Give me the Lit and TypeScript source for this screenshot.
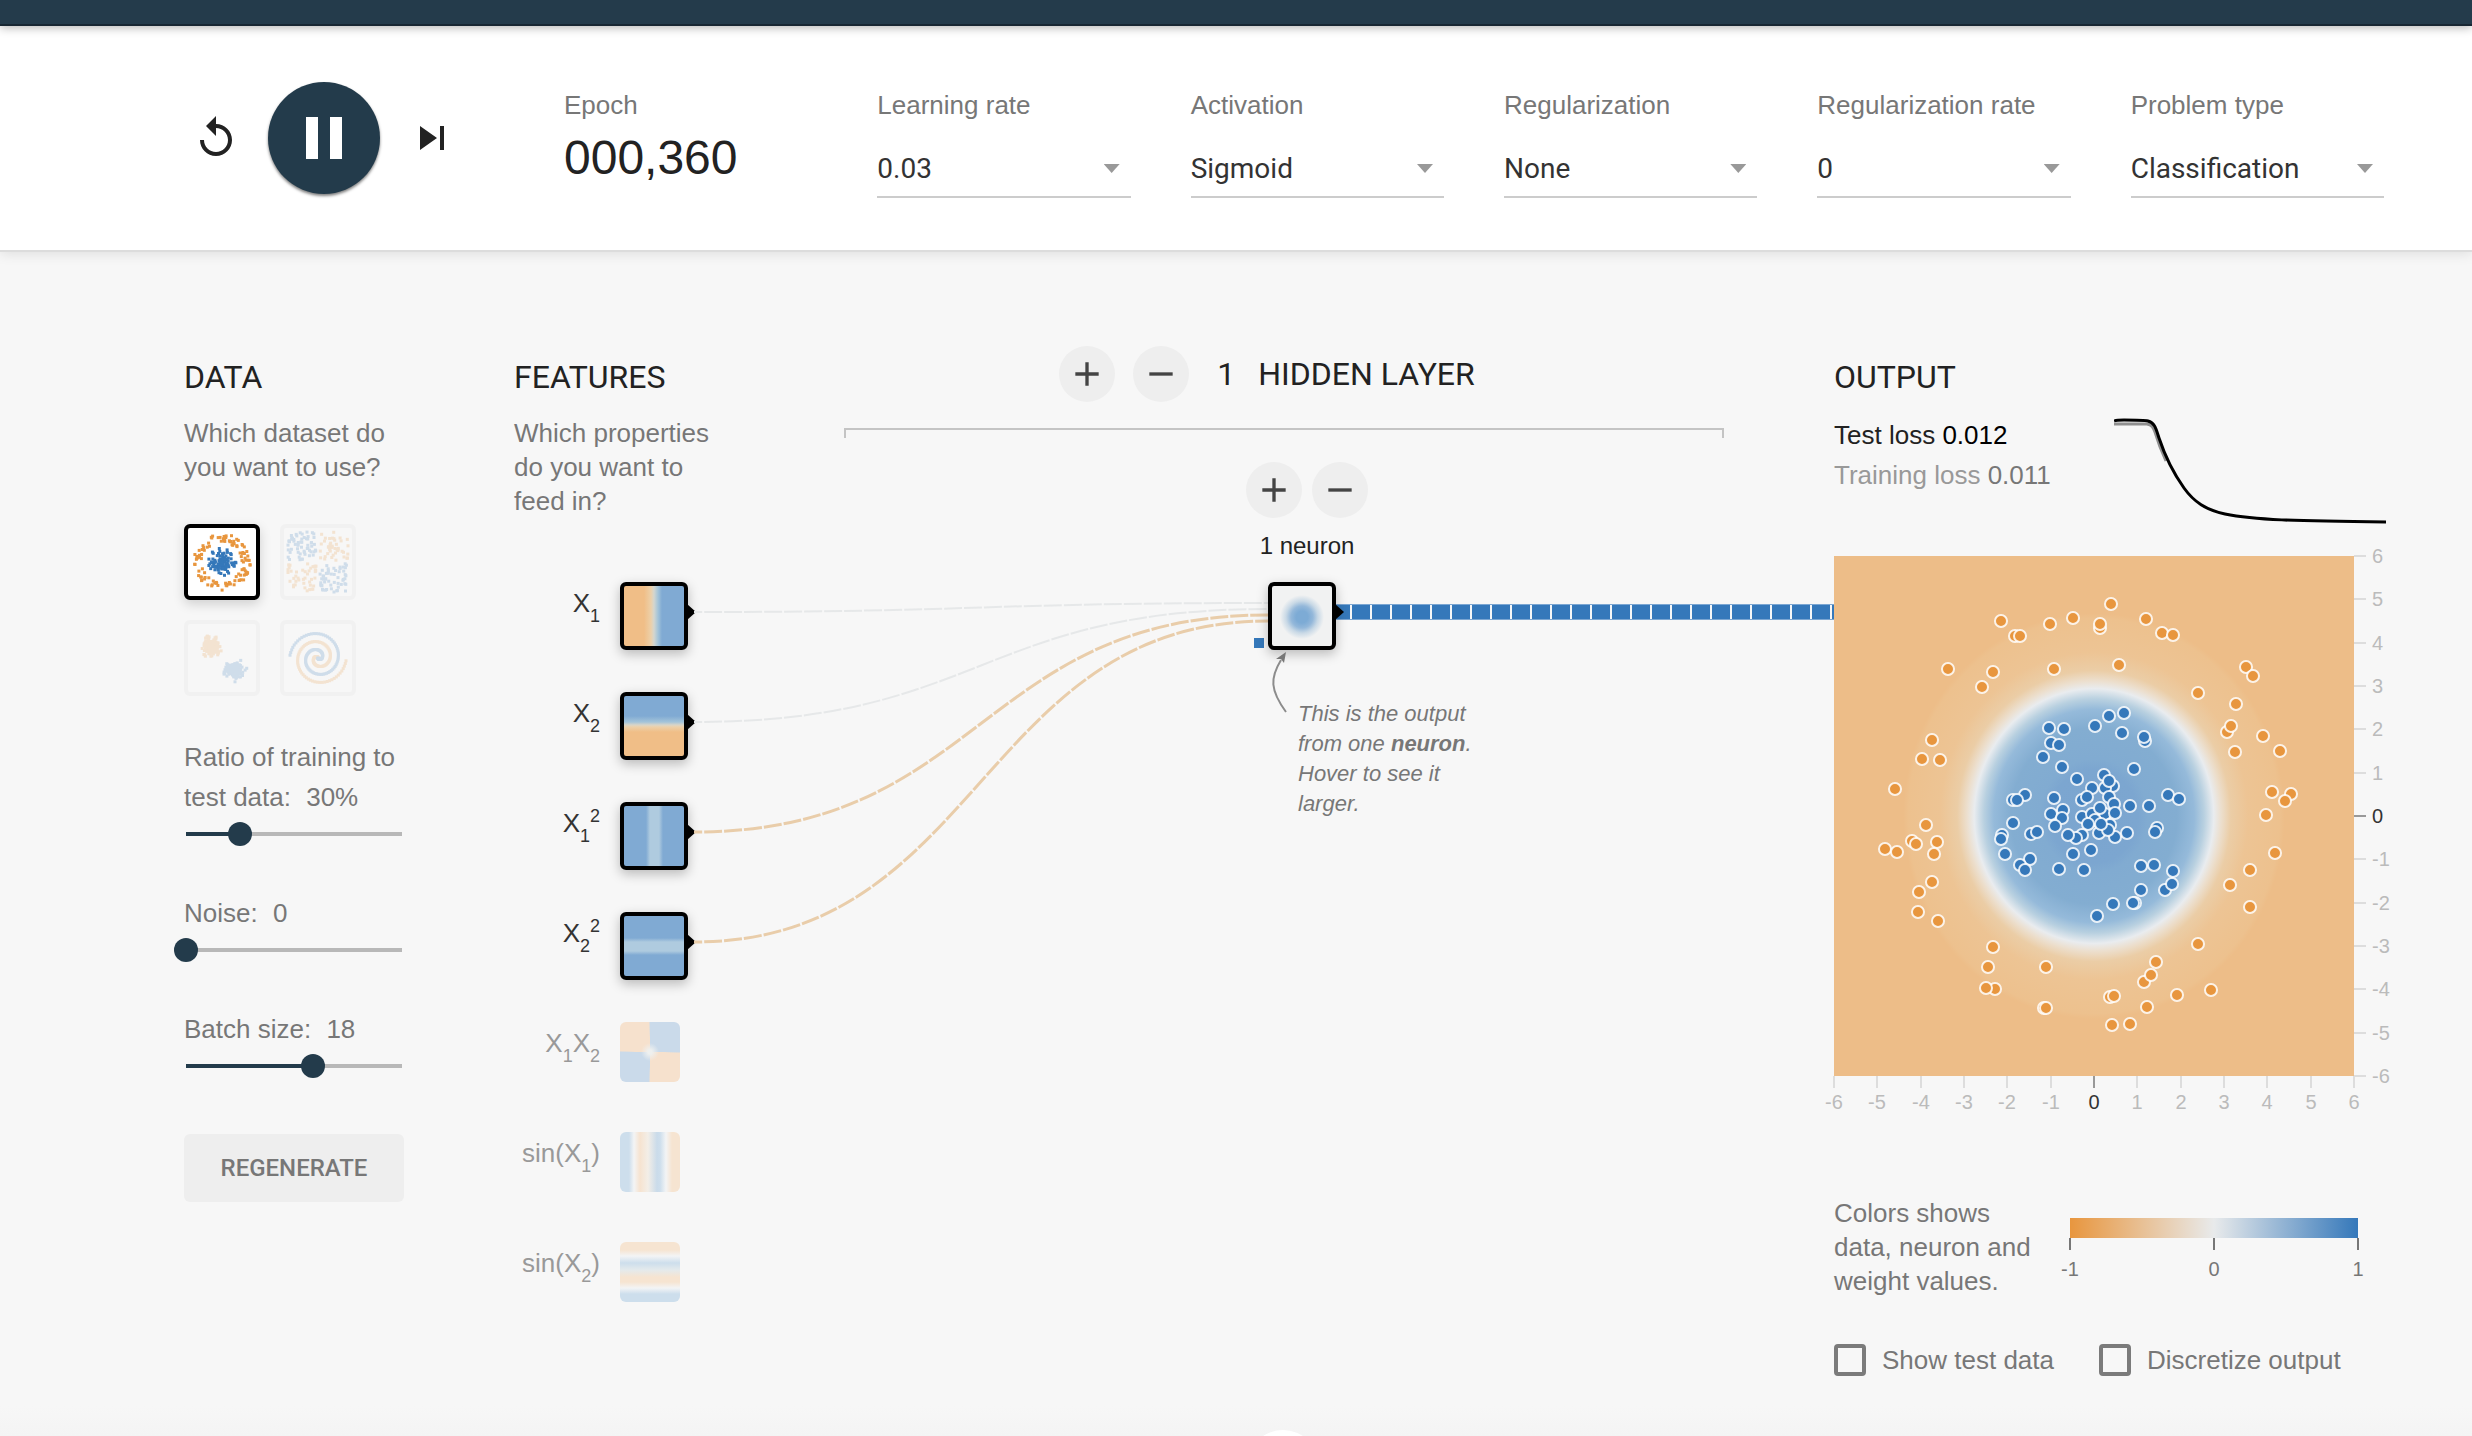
import { LitElement, html, css, svg } from "lit";
import { customElement, property, state } from "lit/decorators.js";
import { classMap } from "lit/directives/class-map.js";
import { styleMap } from "lit/directives/style-map.js";

const ORANGE = "#e8963e";
const BLUE = "#3578ba";

type Dot = { x: number; y: number; positive: boolean };

/** Small deterministic generator, so that the previews look the same on every load. */
function makeRandom(seed: number) {
  let s = seed;
  return () => {
    s = (s * 1664525 + 1013904223) % 4294967296;
    return s / 4294967296;
  };
}

function circleData(): Dot[] {
  const rnd = makeRandom(7);
  const dots: Dot[] = [];
  for (let i = 0; i < 220; i++) {
    const positive = i < 110;
    const r = positive ? rnd() * 2.5 : 3.5 + rnd() * 1.5;
    const a = rnd() * 2 * Math.PI;
    dots.push({ x: r * Math.sin(a), y: r * Math.cos(a), positive });
  }
  return dots;
}

function xorData(): Dot[] {
  const rnd = makeRandom(21);
  const dots: Dot[] = [];
  for (let i = 0; i < 200; i++) {
    let x = rnd() * 10 - 5;
    let y = rnd() * 10 - 5;
    x += x > 0 ? 0.3 : -0.3;
    y += y > 0 ? 0.3 : -0.3;
    dots.push({ x, y, positive: x * y >= 0 });
  }
  return dots;
}

function gaussData(): Dot[] {
  const rnd = makeRandom(3);
  const normal = () => (rnd() + rnd() + rnd() + rnd() - 2) * 1.3;
  const dots: Dot[] = [];
  for (let i = 0; i < 280; i++) {
    const positive = i % 2 === 0;
    const c = positive ? 2.2 : -1.9;
    dots.push({ x: c + normal(), y: c + normal(), positive });
  }
  return dots;
}

function spiralData(): Dot[] {
  const dots: Dot[] = [];
  const n = 110;
  for (const positive of [false, true]) {
    for (let i = 0; i < n; i++) {
      const r = (i / n) * 5;
      const t = ((1.75 * i) / n) * 2 * Math.PI + (positive ? 0 : Math.PI);
      dots.push({ x: r * Math.sin(t), y: r * Math.cos(t), positive });
    }
  }
  return dots;
}

const DATASETS = [
  { id: "circle", label: "Circle", dots: circleData() },
  { id: "xor", label: "Exclusive or", dots: xorData() },
  { id: "gauss", label: "Gaussian", dots: gaussData() },
  { id: "spiral", label: "Spiral", dots: spiralData() },
];

const FIELDS = [
  { id: "learning-rate", label: "Learning rate", value: "0.03", options: ["0.001", "0.01", "0.03", "0.1", "0.3", "1"] },
  { id: "activation", label: "Activation", value: "Sigmoid", options: ["ReLU", "Tanh", "Sigmoid", "Linear"] },
  { id: "regularization", label: "Regularization", value: "None", options: ["None", "L1", "L2"] },
  { id: "regularization-rate", label: "Regularization rate", value: "0", options: ["0", "0.001", "0.01", "0.1", "1"] },
  { id: "problem-type", label: "Problem type", value: "Classification", options: ["Classification", "Regression"] },
];

const FEATURES = [
  { id: "x1", label: html`X<sub>1</sub>`, active: true },
  { id: "x2", label: html`X<sub>2</sub>`, active: true },
  { id: "x1sq", label: html`X<sub>1</sub><sup>2</sup>`, active: true },
  { id: "x2sq", label: html`X<sub>2</sub><sup>2</sup>`, active: true },
  { id: "x1x2", label: html`X<sub>1</sub>X<sub>2</sub>`, active: false },
  { id: "sinx1", label: html`sin(X<sub>1</sub>)`, active: false },
  { id: "sinx2", label: html`sin(X<sub>2</sub>)`, active: false },
];

/** Link start and end heights, measured from the top edge of the first node. */
const LINKS = [
  { from: 30, to: 21, width: 2, color: "#e6e8e9" },
  { from: 140, to: 27, width: 2, color: "#e6e8e9" },
  { from: 250, to: 33, width: 3, color: "#e9cdaa" },
  { from: 360, to: 39, width: 3, color: "#e9cdaa" },
];

/** Points of the training set on the 520 by 520 heat map. */
const NEGATIVE: [number, number][] = [
  [167, 65], [181, 80], [186, 80], [216, 68], [239, 62], [266, 72], [266, 68], [277, 48],
  [312, 63], [328, 77], [339, 79], [114, 113], [159, 116], [148, 131], [220, 113], [285, 109],
  [412, 111], [419, 120], [364, 137], [402, 148], [393, 176], [397, 170], [401, 196], [429, 180],
  [446, 195], [98, 184], [88, 203], [106, 204], [61, 233], [438, 236], [457, 238], [451, 245],
  [432, 259], [92, 269], [78, 285], [82, 288], [103, 286], [51, 293], [63, 296], [100, 298],
  [441, 297], [416, 314], [396, 329], [416, 351], [98, 326], [85, 336], [84, 356], [104, 365],
  [159, 391], [154, 411], [212, 411], [161, 433], [152, 432], [210, 452], [212, 452], [364, 388],
  [322, 406], [310, 426], [317, 419], [276, 441], [280, 440], [343, 439], [377, 434], [313, 451],
  [278, 469], [296, 468],
];
const POSITIVE: [number, number][] = [
  [275, 160], [290, 157], [261, 170], [215, 172], [230, 173], [217, 187], [225, 189], [288, 177],
  [311, 185], [310, 181], [209, 201], [228, 211], [300, 213], [243, 223], [270, 219], [279, 230],
  [271, 232], [275, 225], [258, 232], [248, 244], [253, 241], [191, 239], [179, 244], [183, 244],
  [220, 242], [275, 241], [280, 248], [296, 250], [315, 250], [334, 239], [345, 243], [229, 254],
  [217, 258], [228, 262], [221, 270], [248, 261], [258, 258], [271, 258], [266, 252], [281, 257],
  [261, 264], [254, 268], [276, 269], [179, 267], [197, 278], [203, 276], [293, 277], [281, 281],
  [265, 277], [274, 274], [267, 268], [248, 279], [242, 282], [234, 279], [323, 272], [321, 276],
  [168, 279], [167, 283], [171, 298], [196, 303], [186, 309], [191, 314], [225, 313], [239, 298],
  [257, 294], [250, 314], [307, 310], [320, 309], [339, 315], [331, 334], [338, 328], [307, 334],
  [301, 347], [299, 347], [279, 348], [263, 360],
];

const icon = (path: string, cls: string) => html`
  <svg class=${cls} viewBox="0 0 24 24" aria-hidden="true"><path d=${path} fill="currentColor"></path></svg>
`;
const REPLAY = "M12 5V1L7 6l5 5V7c3.31 0 6 2.69 6 6s-2.69 6-6 6-6-2.69-6-6H4c0 4.42 3.58 8 8 8s8-3.58 8-8-3.58-8-8-8z";
const PAUSE = "M6 19h4V5H6v14zm8-14v14h4V5h-4z";
const PLAY = "M8 5v14l11-7z";
const NEXT = "M6 18l8.5-6L6 6v12zM16 6v12h2V6h-2z";
const ADD = "M19 13h-6v6h-2v-6H5v-2h6V5h2v6h6v2z";
const REMOVE = "M19 13H5v-2h14v2z";

const base = css`
  * {
    box-sizing: border-box;
  }
  button {
    font: inherit;
    border: 0;
    padding: 0;
    background: none;
    color: inherit;
    cursor: pointer;
  }
  svg {
    display: block;
  }
  h2 {
    margin: 0;
    font-family: Roboto, sans-serif;
    font-size: 32px;
    font-weight: 400;
    line-height: 40px;
    color: #222;
  }
  p {
    margin: 0;
  }
`;

@customElement("top-controls")
export class TopControls extends LitElement {
  @state() private playing = true;

  static styles = [
    base,
    css`
      :host {
        display: flex;
        align-items: flex-start;
        gap: 108px;
        padding: 56px 88px 52px 192px;
        background: #fff;
        border-bottom: 2px solid #dcdcdc;
        box-shadow: 0 2px 12px rgba(0, 0, 0, 0.1);
        color: #222;
      }
      .buttons {
        display: flex;
        align-items: center;
        gap: 28px;
      }
      .icon {
        width: 48px;
        height: 48px;
      }
      .play {
        display: grid;
        place-items: center;
        width: 112px;
        height: 112px;
        border-radius: 50%;
        background: #233b4b;
        color: #fff;
        box-shadow: 0 2px 3px rgba(0, 0, 0, 0.5);
      }
      .play-icon {
        width: 72px;
        height: 72px;
      }
      .fields {
        flex: 1;
        display: grid;
        grid-template-columns: repeat(6, minmax(0, 1fr));
        gap: 60px;
        padding-top: 8px;
      }
      .label {
        display: block;
        line-height: 30px;
        color: #777;
        white-space: nowrap;
      }
      .epoch {
        margin-top: 10px;
        font-size: 48px;
        line-height: 56px;
      }
      .select {
        position: relative;
        margin-top: 28px;
      }
      .select::after {
        content: "";
        position: absolute;
        right: 11px;
        top: 16px;
        width: 16px;
        height: 9px;
        background: #999;
        clip-path: polygon(0 0, 100% 0, 50% 100%);
        pointer-events: none;
      }
      select {
        appearance: none;
        display: block;
        width: 100%;
        height: 50px;
        padding: 0 30px 6px 0;
        border: 0;
        border-bottom: 2px solid #ccc;
        border-radius: 0;
        background: none;
        color: #333;
        font-family: Roboto, sans-serif;
        font-size: 28px;
        line-height: 40px;
      }
    `,
  ];

  render() {
    return html`
      <div class="buttons">
        <button type="button" aria-label="Reset the network">${icon(REPLAY, "icon")}</button>
        <button class="play" type="button" aria-label="Run or pause" @click=${() => (this.playing = !this.playing)}>
          ${icon(this.playing ? PAUSE : PLAY, "play-icon")}
        </button>
        <button type="button" aria-label="Step">${icon(NEXT, "icon")}</button>
      </div>
      <div class="fields">
        <div>
          <span class="label">Epoch</span>
          <div class="epoch">000,360</div>
        </div>
        ${FIELDS.map(
          (f) => html`
            <div>
              <label class="label" for=${f.id}>${f.label}</label>
              <div class="select">
                <select id=${f.id}>
                  ${f.options.map((o) => html`<option ?selected=${o === f.value}>${o}</option>`)}
                </select>
              </div>
            </div>
          `
        )}
      </div>
    `;
  }
}

@customElement("labeled-slider")
export class LabeledSlider extends LitElement {
  @property() label = "";
  @property() unit = "";
  @property({ type: Number }) min = 0;
  @property({ type: Number }) max = 100;
  @property({ type: Number }) value = 0;

  static styles = [
    base,
    css`
      :host {
        display: block;
      }
      label {
        display: block;
        line-height: 40px;
      }
      .value {
        margin-left: 8px;
      }
      input {
        appearance: none;
        display: block;
        width: calc(100% + 20px);
        height: 24px;
        margin: 5px -10px 0;
        background:
          linear-gradient(#233b4b, #233b4b) 12px center / calc((100% - 24px) * var(--fill)) 4px no-repeat,
          linear-gradient(#b8b8b8, #b8b8b8) center / calc(100% - 24px) 4px no-repeat;
      }
      input::-webkit-slider-thumb {
        appearance: none;
        width: 24px;
        height: 24px;
        border-radius: 50%;
        background: #233b4b;
      }
    `,
  ];

  render() {
    const fill = (this.value - this.min) / (this.max - this.min);
    return html`
      <label for="range">${this.label} <span class="value">${`${this.value}${this.unit}`}</span></label>
      <input
        id="range"
        type="range"
        min=${this.min}
        max=${this.max}
        .value=${String(this.value)}
        style=${styleMap({ "--fill": String(fill) })}
        @input=${(e: Event) => (this.value = Number((e.target as HTMLInputElement).value))}
      />
    `;
  }
}

@customElement("data-panel")
export class DataPanel extends LitElement {
  @state() private selected = "circle";

  static styles = [
    base,
    css`
      :host {
        display: block;
        padding-top: 11px;
        color: #777;
      }
      .question {
        margin-top: 19px;
      }
      .sets {
        display: grid;
        grid-template-columns: 76px 76px;
        gap: 20px;
        margin-top: 40px;
      }
      .set {
        width: 76px;
        height: 76px;
        border: 4px solid #dcdcdc;
        border-radius: 6px;
        opacity: 0.2;
      }
      .set.selected {
        border-color: #000;
        background: #fff;
        opacity: 1;
        box-shadow: 0 4px 12px rgba(0, 0, 0, 0.16);
      }
      .sliders {
        display: flex;
        flex-direction: column;
        gap: 47px;
        margin-top: 41px;
      }
      .regenerate {
        width: 100%;
        height: 68px;
        margin-top: 56px;
        border-radius: 6px;
        background: #eee;
        font-family: Roboto, sans-serif;
        font-size: 24px;
        font-weight: 500;
        color: #777;
      }
    `,
  ];

  render() {
    return html`
      <h2>DATA</h2>
      <p class="question">Which dataset do you want to use?</p>
      <div class="sets">
        ${DATASETS.map(
          (d) => html`
            <button
              type="button"
              aria-label=${d.label}
              class=${classMap({ set: true, selected: d.id === this.selected })}
              @click=${() => (this.selected = d.id)}
            >
              <svg width="68" height="68" viewBox="0 0 68 68" aria-hidden="true">
                ${d.dots.map(
                  (p) => svg`<rect x=${(34 + p.x * 5.67 - 1.5).toFixed(1)} y=${(34 + p.y * 5.67 - 1.5).toFixed(1)}
                    width="3" height="3" fill=${p.positive ? BLUE : ORANGE}></rect>`
                )}
              </svg>
            </button>
          `
        )}
      </div>
      <div class="sliders">
        <labeled-slider label="Ratio of training to test data:" unit="%" min="10" max="90" value="30"></labeled-slider>
        <labeled-slider label="Noise:" min="0" max="50" value="0"></labeled-slider>
        <labeled-slider label="Batch size:" min="1" max="30" value="18"></labeled-slider>
      </div>
      <button class="regenerate" type="button">REGENERATE</button>
    `;
  }
}

const nodeStyles = css`
  .node {
    position: relative;
    display: block;
    width: 60px;
    height: 60px;
    border-radius: 6px;
  }
  .node.active {
    width: 68px;
    height: 68px;
    border: 4px solid #000;
    box-shadow: 0 4px 12px rgba(0, 0, 0, 0.25);
  }
  .node.active::after {
    content: "";
    position: absolute;
    left: 63px;
    top: 18px;
    width: 9px;
    height: 16px;
    background: #000;
    clip-path: polygon(0 0, 100% 50%, 0 100%);
  }
`;

@customElement("feature-panel")
export class FeaturePanel extends LitElement {
  static styles = [
    base,
    nodeStyles,
    css`
      :host {
        display: block;
        padding-top: 11px;
        color: #777;
      }
      .question {
        width: 206px;
        margin-top: 19px;
      }
      .rows {
        display: flex;
        flex-direction: column;
        gap: 50px;
        margin-top: 64px;
      }
      .row {
        display: grid;
        grid-template-columns: 86px 60px;
        gap: 20px;
        height: 60px;
      }
      .name {
        text-align: right;
        line-height: 42px;
        white-space: nowrap;
        color: #999;
      }
      .name.active {
        color: #333;
      }
      sub,
      sup {
        font-size: 18px;
        line-height: 0;
        vertical-align: -10px;
      }
      sup {
        vertical-align: 10px;
      }
      .x1 {
        background: linear-gradient(90deg, #f0be87 20px, #ecd0a9 27px, #d3d6cf 30px, #a3c4d9 34px, #80aad3 38px);
      }
      .x2 {
        background: linear-gradient(180deg, #80aad3 20px, #a3c4d9 26px, #d9d5c8 29px, #ecd0a9 31px, #f0be87 36px);
      }
      .x1sq {
        background: linear-gradient(90deg, #80aad3 22px, #afcbdf 26px, #afcbdf 35px, #80aad3 39px);
      }
      .x2sq {
        background: linear-gradient(180deg, #80aad3 22px, #afcbdf 26px, #afcbdf 35px, #80aad3 39px);
      }
      .x1x2 {
        background:
          radial-gradient(circle, #eef0ef 2px, transparent 9px),
          conic-gradient(#cadaea 90deg, #f6e1cd 92deg 180deg, #cadaea 182deg 270deg, #f6e1cd 272deg 358deg, #cadaea);
      }
      .sinx1 {
        background: linear-gradient(90deg, #cddeec 9px, #f3f4f5 14px, #f6e3d0 20px, #f3eee7 28px, #cadbea 37px, #cddeec 40px, #f3f4f5 46px, #f6e4d1 52px);
      }
      .sinx2 {
        background: linear-gradient(180deg, #f6e4d1 8px, #f3f4f5 14px, #cddeec 21px, #e4eaec 28px, #f6e4d1 35px, #f6e4d1 40px, #f3f4f5 46px, #cddeec 52px);
      }
    `,
  ];

  render() {
    return html`
      <h2>FEATURES</h2>
      <p class="question">Which properties do you want to feed in?</p>
      <div class="rows">
        ${FEATURES.map(
          (f) => html`
            <div class="row">
              <span id=${`name-${f.id}`} class=${classMap({ name: true, active: f.active })}>${f.label}</span>
              <button
                type="button"
                aria-labelledby=${`name-${f.id}`}
                class=${classMap({ node: true, active: f.active, [f.id]: true })}
              ></button>
            </div>
          `
        )}
      </div>
    `;
  }
}

@customElement("hidden-layers")
export class HiddenLayers extends LitElement {
  static styles = [
    base,
    nodeStyles,
    css`
      :host {
        display: block;
        position: relative;
      }
      .head {
        display: flex;
        justify-content: center;
        align-items: center;
        gap: 18px;
        padding-right: 34px;
        white-space: nowrap;
      }
      .round {
        display: grid;
        place-items: center;
        width: 56px;
        height: 56px;
        border-radius: 50%;
        background: #eee;
        color: #444;
      }
      .sign {
        width: 40px;
        height: 40px;
      }
      .count {
        padding: 0 5px 0 10px;
      }
      .bracket {
        height: 10px;
        margin-top: 26px;
        border: 2px solid #c4c4c4;
        border-bottom: 0;
      }
      .layer {
        display: flex;
        justify-content: center;
        margin-top: 24px;
        padding-left: 46px;
      }
      .stack {
        display: flex;
        flex-direction: column;
        align-items: flex-start;
        width: 122px;
      }
      .pair {
        display: flex;
        gap: 10px;
      }
      .neurons {
        width: 100%;
        margin-top: 13px;
        text-align: center;
        font-size: 24px;
        line-height: 30px;
        color: #222;
      }
      .holder {
        position: relative;
        margin: 21px 0 0 22px;
      }
      .neuron {
        background: radial-gradient(circle at 30px 31px, #7dabd5 6px, #94b8da 11px, #c9d9e6 16px, #f1f2f2 22px);
      }
      .bias {
        position: absolute;
        left: -14px;
        top: 56px;
        width: 10px;
        height: 10px;
        background: #3578ba;
      }
      .arrow {
        position: absolute;
        left: 0;
        top: 68px;
      }
      .callout {
        width: 178px;
        margin: 49px 0 0 52px;
        font-size: 22px;
        font-style: italic;
        line-height: 30px;
        color: #777;
      }
      .links {
        position: absolute;
        left: -150px;
        right: calc(50% + 16px);
        top: 236px;
        height: 400px;
        pointer-events: none;
      }
      .out {
        position: absolute;
        left: calc(50% + 50px);
        right: -110px;
        top: 258px;
        height: 16px;
        background: repeating-linear-gradient(90deg, #3578ba 0 18px, transparent 18px 20px) -2px 0;
        border: solid #7ba6d2;
        border-width: 1px 0;
        background-clip: padding-box;
      }
    `,
  ];

  render() {
    return html`
      <div class="links">
        <svg width="100%" height="100%" viewBox="0 0 574 400" preserveAspectRatio="none" aria-hidden="true">
          ${LINKS.map(
            (l) => svg`<path d=${`M0 ${l.from} C287 ${l.from} 287 ${l.to} 574 ${l.to}`} fill="none" stroke=${l.color}
              stroke-width=${l.width} stroke-dasharray="18 2" stroke-dashoffset="10" vector-effect="non-scaling-stroke"></path>`
          )}
        </svg>
      </div>
      <div class="out"></div>
      <div class="head">
        <button class="round" type="button" aria-label="Add layer">${icon(ADD, "sign")}</button>
        <button class="round" type="button" aria-label="Remove layer">${icon(REMOVE, "sign")}</button>
        <h2 class="count">1</h2>
        <h2>HIDDEN LAYER</h2>
      </div>
      <div class="bracket"></div>
      <div class="layer">
        <div class="stack">
          <div class="pair">
            <button class="round" type="button" aria-label="Add neuron">${icon(ADD, "sign")}</button>
            <button class="round" type="button" aria-label="Remove neuron">${icon(REMOVE, "sign")}</button>
          </div>
          <div class="neurons">1 neuron</div>
          <div class="holder">
            <span class="bias"></span>
            <button class="node active neuron" type="button" aria-label="Neuron"></button>
            <svg class="arrow" width="30" height="64" viewBox="0 0 30 64" aria-hidden="true">
              <path d="M18 62 C2 40 2 28 13 10" fill="none" stroke="#8c8c8c" stroke-width="2"></path>
              <path d="M18 2 L8 9 L13 9 L16 13 Z" fill="#777"></path>
            </svg>
          </div>
          <p class="callout">This is the output from one <b>neuron</b>. Hover to see it larger.</p>
        </div>
      </div>
    `;
  }
}

@customElement("output-panel")
export class OutputPanel extends LitElement {
  static styles = [
    base,
    css`
      :host {
        display: block;
        position: relative;
        padding-top: 11px;
        color: #777;
      }
      .losses {
        display: flex;
        justify-content: space-between;
        margin-top: 18px;
        line-height: 40px;
        white-space: nowrap;
      }
      .test {
        color: #222;
      }
      .train {
        color: #999;
      }
      .test b {
        font-weight: 400;
        color: #000;
      }
      .train b {
        font-weight: 400;
        color: #777;
      }
      .map {
        width: 100%;
        margin-top: 29px;
        overflow: visible;
      }
      .axis {
        font-size: 20px;
      }
      .legend {
        display: grid;
        grid-template-columns: 204px 288px;
        gap: 32px;
        margin-top: 80px;
      }
      .scale {
        margin-top: 22px;
        overflow: visible;
        font-size: 20px;
      }
      .checks {
        display: flex;
        gap: 45px;
        margin-top: 46px;
        white-space: nowrap;
      }
      .check {
        display: flex;
        align-items: center;
        gap: 16px;
        height: 32px;
      }
      .box {
        appearance: none;
        width: 32px;
        height: 32px;
        margin: 0;
        border: 4px solid #7b7b7b;
        border-radius: 4px;
      }
      .box:checked {
        background: #7b7b7b;
      }
    `,
  ];

  private axes() {
    const step = 520 / 12;
    return Array.from({ length: 13 }, (_, i) => {
      const at = Math.round(i * step);
      const zero = i === 6;
      const line = zero ? "#999" : "#ddd";
      const text = zero ? "#333" : "#bbb";
      return svg`
        <path d=${`M520 ${at}h12M${at} 520v12`} stroke=${line} stroke-width="2"></path>
        <text x="538" y=${at + 7} fill=${text}>${6 - i}</text>
        <text x=${at} y="553" text-anchor="middle" fill=${text}>${i - 6}</text>
      `;
    });
  }

  render() {
    const dot = (p: [number, number], fill: string) => svg`<circle cx=${p[0]} cy=${p[1]} r="6" fill=${fill}></circle>`;
    return html`
      <h2>OUTPUT</h2>
      <div class="losses">
        <div>
          <div class="test">Test loss <b>0.012</b></div>
          <div class="train">Training loss <b>0.011</b></div>
        </div>
        <svg width="272" height="112" viewBox="0 0 272 112" aria-hidden="true">
          <g fill="none" stroke-width="3">
            <path d="M0 9 H33 C38 10 39 12 41 17 C44 27 47 35 52 46" stroke="#8f8f8f"></path>
            <path d="M0 6 C2 5 4 5 10 5 C22 5 30 5 34 6 C41 8 42 14 45 23 C51 41 60 59 70 73 C80 87 92 95 111 99 C140 105 180 106 272 107" stroke="#000"></path>
          </g>
        </svg>
      </div>
      <svg class="map" viewBox="0 0 552 560" role="img" aria-label="Network output">
        <defs>
          <radialGradient id="heat" gradientUnits="userSpaceOnUse" cx="0" cy="0" r="260"
            gradientTransform="translate(260 260) scale(0.94 1)">
            <stop offset="0" stop-color="#7ba5cf"></stop>
            <stop offset="0.18" stop-color="#7ca6d0"></stop>
            <stop offset="0.22" stop-color="#81abd1"></stop>
            <stop offset="0.34" stop-color="#83add1"></stop>
            <stop offset="0.41" stop-color="#95bada"></stop>
            <stop offset="0.45" stop-color="#b8d0e0"></stop>
            <stop offset="0.49" stop-color="#e9ecef"></stop>
            <stop offset="0.52" stop-color="#ecdfce"></stop>
            <stop offset="0.56" stop-color="#ebcda6"></stop>
            <stop offset="0.63" stop-color="#edc494"></stop>
            <stop offset="0.76" stop-color="#edc18e"></stop>
            <stop offset="0.78" stop-color="#edbd88"></stop>
          </radialGradient>
        </defs>
        <rect width="520" height="520" fill="url(#heat)"></rect>
        <g stroke="#fff" stroke-opacity="0.85" stroke-width="2">
          ${NEGATIVE.map((p) => dot(p, ORANGE))} ${POSITIVE.map((p) => dot(p, BLUE))}
        </g>
        <g class="axis">${this.axes()}</g>
      </svg>
      <div class="legend">
        <p>Colors shows data, neuron and weight values.</p>
        <svg class="scale" width="288" height="62" viewBox="0 0 288 62" aria-hidden="true">
          <defs>
            <linearGradient id="ramp">
              <stop offset="0" stop-color=${ORANGE}></stop>
              <stop offset="0.5" stop-color="#e8eaeb"></stop>
              <stop offset="1" stop-color=${BLUE}></stop>
            </linearGradient>
          </defs>
          <rect width="288" height="20" fill="url(#ramp)"></rect>
          <path d="M0 20v12M144 20v12M288 20v12" stroke="#777" stroke-width="2"></path>
          ${[-1, 0, 1].map((v) => svg`<text x=${144 + v * 144} y="58" text-anchor="middle" fill="#777">${v}</text>`)}
        </svg>
      </div>
      <div class="checks">
        <label class="check"><input class="box" type="checkbox" />Show test data</label>
        <label class="check"><input class="box" type="checkbox" />Discretize output</label>
      </div>
    `;
  }
}

@customElement("app-root")
export class AppRoot extends LitElement {
  static styles = [
    base,
    css`
      :host {
        display: flex;
        flex-direction: column;
        min-height: 100vh;
        background: #f7f7f7;
        font-family: "Liberation Sans", Arial, sans-serif;
        font-size: 26px;
        line-height: 34px;
      }
      header {
        position: relative;
        height: 26px;
        background: #243b4b;
        border-bottom: 2px solid #182733;
        box-shadow: 0 2px 10px rgba(0, 0, 0, 0.28);
      }
      main {
        display: grid;
        grid-template-columns: 220px 220px minmax(400px, 1fr) 552px;
        gap: 110px;
        padding: 94px 86px 30px 184px;
      }
      footer {
        display: flex;
        justify-content: center;
        flex: 1;
        max-height: 30px;
        padding: 24px 94px 0 188px;
        overflow: hidden;
        background: linear-gradient(#f7f7f7, #f4f4f4);
      }
      .more {
        width: 72px;
        height: 72px;
        border-radius: 50%;
        background: #fff;
      }
    `,
  ];

  render() {
    return html`
      <header></header>
      <top-controls></top-controls>
      <main>
        <data-panel></data-panel>
        <feature-panel></feature-panel>
        <hidden-layers></hidden-layers>
        <output-panel></output-panel>
      </main>
      <footer><button class="more" type="button" aria-label="Scroll to the article"></button></footer>
    `;
  }
}
